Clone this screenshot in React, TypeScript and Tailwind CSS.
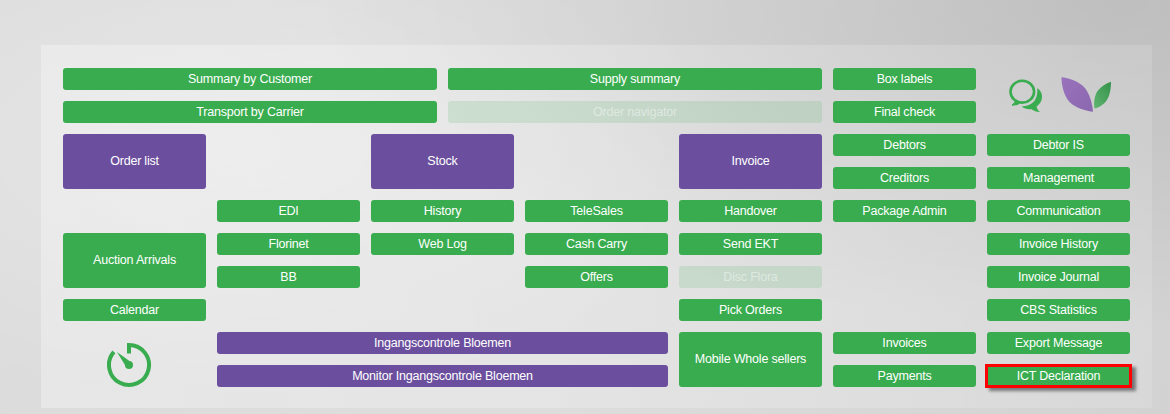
// Main menu tile board: green and purple shortcuts on a 14-track grid, over a pale grey backdrop.
const GREEN = "bg-[#38ac4e] text-white";
const PURPLE = "bg-[#6b4f9e] text-white";
const OFF = "bg-[#38ac4e]/15 text-white/45";

type Tile = { label: string; cls: string; tone?: string };

const tiles: Tile[] = [
  { label: "Summary by Customer", cls: "col-start-1 col-span-5 row-start-1" },
  { label: "Supply summary", cls: "col-start-6 col-span-5 row-start-1" },
  { label: "Box labels", cls: "col-start-11 col-span-2 row-start-1" },
  { label: "Transport by Carrier", cls: "col-start-1 col-span-5 row-start-2" },
  { label: "Order navigator", cls: "col-start-6 col-span-5 row-start-2", tone: OFF },
  { label: "Final check", cls: "col-start-11 col-span-2 row-start-2" },
  { label: "Order list", cls: "col-start-1 col-span-2 row-start-3 row-span-2", tone: PURPLE },
  { label: "Stock", cls: "col-start-5 col-span-2 row-start-3 row-span-2", tone: PURPLE },
  { label: "Invoice", cls: "col-start-9 col-span-2 row-start-3 row-span-2", tone: PURPLE },
  { label: "Debtors", cls: "col-start-11 col-span-2 row-start-3" },
  { label: "Debtor IS", cls: "col-start-13 col-span-2 row-start-3" },
  { label: "Creditors", cls: "col-start-11 col-span-2 row-start-4" },
  { label: "Management", cls: "col-start-13 col-span-2 row-start-4" },
  { label: "EDI", cls: "col-start-3 col-span-2 row-start-5" },
  { label: "History", cls: "col-start-5 col-span-2 row-start-5" },
  { label: "TeleSales", cls: "col-start-7 col-span-2 row-start-5" },
  { label: "Handover", cls: "col-start-9 col-span-2 row-start-5" },
  { label: "Package Admin", cls: "col-start-11 col-span-2 row-start-5" },
  { label: "Communication", cls: "col-start-13 col-span-2 row-start-5" },
  { label: "Auction Arrivals", cls: "col-start-1 col-span-2 row-start-6 row-span-2" },
  { label: "Florinet", cls: "col-start-3 col-span-2 row-start-6" },
  { label: "Web Log", cls: "col-start-5 col-span-2 row-start-6" },
  { label: "Cash Carry", cls: "col-start-7 col-span-2 row-start-6" },
  { label: "Send EKT", cls: "col-start-9 col-span-2 row-start-6" },
  { label: "Invoice History", cls: "col-start-13 col-span-2 row-start-6" },
  { label: "BB", cls: "col-start-3 col-span-2 row-start-7" },
  { label: "Offers", cls: "col-start-7 col-span-2 row-start-7" },
  { label: "Disc Flora", cls: "col-start-9 col-span-2 row-start-7", tone: OFF },
  { label: "Invoice Journal", cls: "col-start-13 col-span-2 row-start-7" },
  { label: "Calendar", cls: "col-start-1 col-span-2 row-start-8" },
  { label: "Pick Orders", cls: "col-start-9 col-span-2 row-start-8" },
  { label: "CBS Statistics", cls: "col-start-13 col-span-2 row-start-8" },
  { label: "Ingangscontrole Bloemen", cls: "col-start-3 col-span-6 row-start-9", tone: PURPLE },
  { label: "Mobile Whole sellers", cls: "col-start-9 col-span-2 row-start-9 row-span-2" },
  { label: "Invoices", cls: "col-start-11 col-span-2 row-start-9" },
  { label: "Export Message", cls: "col-start-13 col-span-2 row-start-9" },
  { label: "Monitor Ingangscontrole Bloemen", cls: "col-start-3 col-span-6 row-start-10", tone: PURPLE },
  { label: "Payments", cls: "col-start-11 col-span-2 row-start-10" },
];

function ChatIcon() {
  return (
    <svg width="33" height="33" viewBox="0 0 33 33" fill="none" aria-hidden>
      <ellipse cx="13.3" cy="12.7" rx="11.8" ry="10.9" stroke="#38ac4e" strokeWidth="2.6" />
      <path d="M6.5 20.5 5.8 23.6 3 26.2 8.5 25.6 11.5 23.4Z" fill="#38ac4e" stroke="#38ac4e" strokeWidth="1" />
      <path
        d="M28.2 9.2C31.6 11 33.3 14.6 33 18.4 32.8 22 30.4 25.6 27.6 27.4 28 29.6 29.4 31.8 31 33 27.6 32.8 24.4 31.8 22.6 30.2 19 30.6 15 29.8 12.7 27.6 17.6 27.2 22.6 25.4 25.4 22 27.8 18.8 28.8 13.6 28.2 9.2Z"
        fill="#38ac4e"
      />
    </svg>
  );
}

function LeafLogo() {
  return (
    <svg width="51" height="35" viewBox="0 0 51 35" aria-hidden>
      <defs>
        <linearGradient id="purpleLeaf" x1="0" y1="0" x2="1" y2="1">
          <stop offset="0" stopColor="#9a72bd" />
          <stop offset="1" stopColor="#8a68ae" />
        </linearGradient>
        <linearGradient id="greenLeaf" x1="1" y1="0" x2="0" y2="1">
          <stop offset="0" stopColor="#34934a" />
          <stop offset="1" stopColor="#5fb470" />
        </linearGradient>
      </defs>
      <path d="M0.5 0.3C11 1.5 21 6 26 14 29.5 20 31.5 28 32 34.7 22 33.5 12 30 6.5 22.5 2.5 16.5 0.5 8 0.5 0.3Z" fill="url(#purpleLeaf)" />
      <path d="M50 4.7C50 14 48 22 43 26.5 39.5 29.5 36 31 33.5 31.5 32.5 25 33.5 18 37 13.5 40 9.5 45 6.5 50 4.7Z" fill="url(#greenLeaf)" />
    </svg>
  );
}

function TimerIcon() {
  return (
    <svg width="46" height="46" viewBox="0 0 46 46" fill="none" aria-hidden>
      <path d="M23 11.5V3A20 20 0 1 1 7.9 9.9" stroke="#38ac4e" strokeWidth="4" />
      <path d="M11 10 25.5 20.5 20.5 25.5Z" fill="#38ac4e" />
      <circle cx="23" cy="23" r="4" fill="#38ac4e" />
    </svg>
  );
}

export default function App() {
  return (
    <div className="h-[414px] w-[1170px] overflow-hidden bg-[radial-gradient(ellipse_800px_330px_at_95%_0%,rgba(0,0,0,0.1),transparent),radial-gradient(ellipse_500px_260px_at_20%_35%,rgba(255,255,255,0.3),transparent),linear-gradient(100deg,#dcdcdc,#dddddd_50%,#d2d2d2)] pl-[41px] pt-[45px] font-['Liberation_Sans',Arial,sans-serif] text-[12.5px] tracking-[-0.2px]">
      <div className="h-[363px] w-[1111px] bg-[linear-gradient(90deg,rgba(255,255,255,0.3),rgba(255,255,255,0.13))] pl-[22px] pt-[23px]">
        <div className="grid grid-cols-[repeat(14,66px)] auto-rows-[22px] gap-[11px]">
          {tiles.map((tile) => (
            <a
              key={tile.label}
              className={`flex items-center justify-center rounded-[3px] ${tile.cls} ${tile.tone ?? GREEN}`}
            >
              {tile.label}
            </a>
          ))}
          <a className="col-start-13 col-span-2 row-start-10 -mx-[2px] -my-[1px] flex items-center justify-center border-[3px] border-[#f00] bg-[#38ac4e] text-white shadow-[4px_3px_3px_rgba(0,0,0,0.45)]">
            ICT Declaration
          </a>
          <div className="col-start-13 col-span-2 row-start-1 row-span-2 flex items-center gap-[19px] pl-[22px]">
            <ChatIcon />
            <div className="mb-[2px]">
              <LeafLogo />
            </div>
          </div>
          <div className="col-start-1 col-span-2 row-start-9 row-span-2 flex items-start pl-[43px] pt-[10px]">
            <TimerIcon />
          </div>
        </div>
      </div>
    </div>
  );
}
